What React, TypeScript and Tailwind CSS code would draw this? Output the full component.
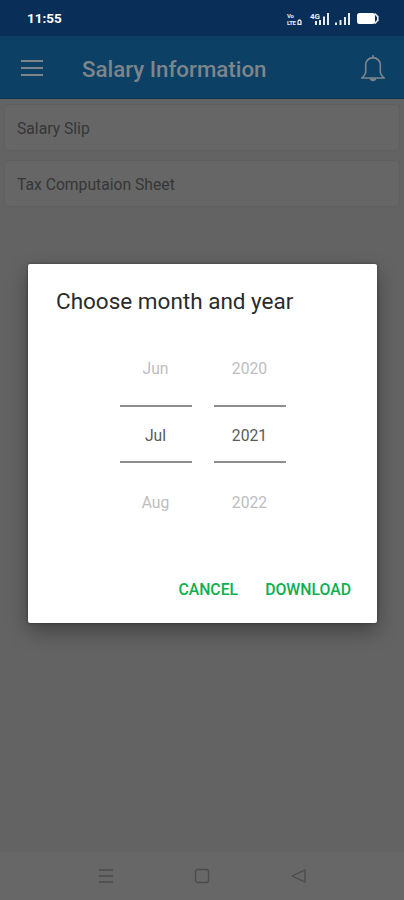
import { useState } from "react";

const documents = ["Salary Slip", "Tax Computaion Sheet"];

interface PickerProps {
  values: string[];
  selected: number;
  onSelect: (index: number) => void;
}

function StatusBar() {
  return (
    <div className="h-9 shrink-0 bg-[#092e57] flex items-center justify-between pl-[27px] pr-[25px] text-white">
      <span className="mt-[2px] text-[13.5px] leading-none font-bold">11:55</span>
      <div className="flex items-end h-[14px] mt-[2px] text-[#e6ebf2]">
        {/* VoLTE */}
        <div className="w-[10px] h-[14px] flex flex-col justify-between text-[6px] leading-[7px] font-bold tracking-[-0.4px]">
          <span>Vo</span>
          <span>LTE</span>
        </div>
        <svg className="mr-[8px]" width="5" height="14" viewBox="0 0 5 14" fill="none" stroke="currentColor" strokeWidth="1.300">
          <path d="M1 13V9.500C1 7.500 4 7.500 4 9.500V13M1 12.300h3" />
        </svg>
        <span className="self-start w-[4px] text-[8px] leading-[9px] font-bold">4G</span>
        <svg width="65" height="14" viewBox="26 0 65 14" fill="currentColor">
          <rect x="27" y="9" width="2" height="4" />
          <rect x="31" y="8" width="2" height="5" />
          <rect x="35" y="4.5" width="2" height="8.5" />
          <rect x="39" y="1" width="2" height="12" />
          {/* second SIM signal */}
          <rect x="47" y="10.500" width="2" height="2.500" />
          <rect x="51.500" y="8" width="2" height="5" />
          <rect x="56" y="5" width="2" height="8" />
          <rect x="60" y="1" width="2" height="12" />
          {/* battery */}
          <rect x="69" y="1" width="18" height="11" rx="2.5" fill="#ffffff" />
          <path d="M86.500 1.700c1.600.3 1.700 2.300 3.300 2.800v4c-1.600.5-1.700 2.500-3.300 2.800" fill="none" stroke="#e6ebf2" strokeWidth="1.600" />
        </svg>
      </div>
    </div>
  );
}

function Header() {
  return (
    <header className="h-[63px] shrink-0 bg-[#0d4065] flex items-center pl-[21px] pr-[18px] text-[#7d858b] border-b border-[#0b3554]">
      <button aria-label="Menu" className="flex flex-col gap-[5px] w-[22px] mt-[2px]">
        <span className="h-[2px] w-full bg-current" />
        <span className="h-[2px] w-full bg-current" />
        <span className="h-[2px] w-full bg-current" />
      </button>
      <h1 className="ml-[39px] mt-[3px] text-[22.3px] leading-7 font-medium whitespace-nowrap">Salary Information</h1>
      <button aria-label="Notifications" className="ml-auto mt-[3px]">
        <svg width="26" height="28" viewBox="0 0 26 28" fill="none" stroke="currentColor" strokeWidth="1.6" strokeLinejoin="round">
          <path d="M13 2.600c-4.800.4-7.200 3.400-7.300 7.600v6.500c0 2.400-1.700 4.300-4 6.300h22.600c-2.300-2-4-3.900-4-6.300v-6.500c-.1-4.200-2.500-7.200-7.300-7.600z" />
          <path d="M13 .8v1.600" strokeLinecap="round" />
          <path d="M9.600 23.500c.5 3.600 6.300 3.600 6.800 0z" fill="currentColor" stroke="none" />
        </svg>
      </button>
    </header>
  );
}

function Picker({ values, selected, onSelect }: PickerProps) {
  return (
    <div className="w-[72px] flex flex-col items-center text-[15.7px]">
      {values.map((value, i) => (
        <button
          key={value}
          onClick={() => onSelect(i)}
          className={
            i === selected
              ? "w-full h-[58px] pt-[3px] border-y-2 border-[#8e8e8e] text-[#5a5a5a]"
              : "w-full h-[38px] my-[19px] pt-[3px] first:mt-0 last:mb-0 text-[#bdbdbd]"
          }
        >
          {value}
        </button>
      ))}
    </div>
  );
}

function NavigationBar() {
  return (
    <nav className="h-[48px] shrink-0 bg-[#676767] flex items-center justify-between px-[98px] text-[#4b4b4b]">
      <svg width="16" height="16" viewBox="0 0 16 16" fill="none" stroke="currentColor" strokeWidth="1.3">
        <path d="M1 2h14M1 8h14M1 14h14" />
      </svg>
      <svg width="16" height="16" viewBox="0 0 16 16" fill="none" stroke="currentColor" strokeWidth="1.3">
        <rect x="1.500" y="1.500" width="13" height="13" rx="2" />
      </svg>
      <svg width="16" height="16" viewBox="0 0 16 16" fill="none" stroke="currentColor" strokeWidth="1.3" strokeLinejoin="round">
        <path d="M15 1.800v12.400L2.200 8z" />
      </svg>
    </nav>
  );
}

export default function App() {
  const [month, setMonth] = useState(1);
  const [year, setYear] = useState(1);

  return (
    <div className="relative w-full h-[900px] flex flex-col bg-[#636363] font-['Roboto',sans-serif] overflow-hidden">
      <StatusBar />
      <Header />

      <main className="flex-1 px-[5px] pt-[6px] flex flex-col gap-[11px]">
        {documents.map((name) => (
          <div
            key={name}
            className="h-[45px] flex items-center px-3 pt-[3px] rounded-[3px] bg-[#666666] text-[#363636] text-[15.7px] shadow-[0_0_2px_rgba(0,0,0,0.12)]"
          >
            {name}
          </div>
        ))}
      </main>

      <NavigationBar />

      {/* Month / year dialog */}
      <div
        role="dialog"
        className="absolute left-[28px] top-[264px] w-[349px] h-[359px] flex flex-col rounded-[2px] bg-white shadow-[0_8px_20px_rgba(0,0,0,0.35),0_0_3px_rgba(0,0,0,0.4)]"
      >
        <h2 className="pl-[28px] pt-[22px] text-[22.5px] leading-[30px] text-[#2b2b2b] whitespace-nowrap">
          Choose month and year
        </h2>
        <div className="mt-[32px] flex justify-center gap-[22px]">
          <Picker values={["Jun", "Jul", "Aug"]} selected={month} onSelect={setMonth} />
          <Picker values={["2020", "2021", "2022"]} selected={year} onSelect={setYear} />
        </div>
        <div className="mt-auto mb-[21px] pr-[26px] flex justify-end gap-[27px] text-[15.8px] leading-6 font-medium text-[#0cb04e]">
          <button>CANCEL</button>
          <button>DOWNLOAD</button>
        </div>
      </div>
    </div>
  );
}
